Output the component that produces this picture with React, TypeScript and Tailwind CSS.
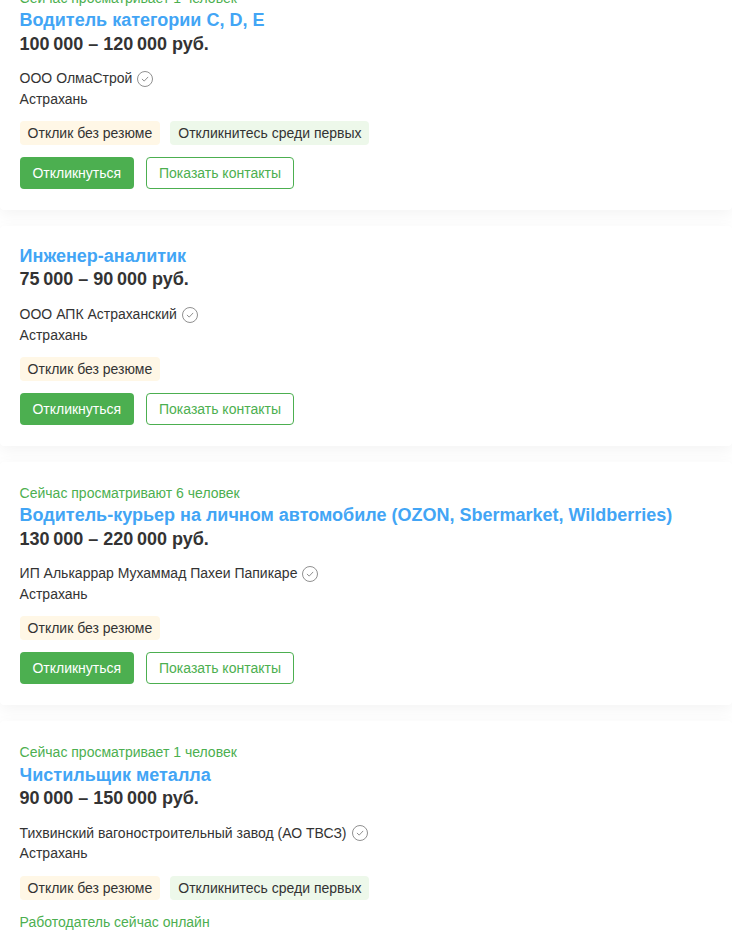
const Check = () => (
  <svg width="16" height="16" viewBox="0 0 16 16" fill="none" className="ml-[5px] shrink-0">
    <circle cx="8" cy="8" r="7.5" stroke="#909090" />
    <path d="M5.2 8.2 7.2 10.1 10.9 6.2" stroke="#909090" strokeLinecap="round" strokeLinejoin="round" />
  </svg>
);

type Vacancy = {
  viewing?: string;
  title: string;
  salary: string;
  company: string;
  first?: boolean;
  online?: boolean;
};

const VACANCIES: Vacancy[] = [
  { viewing: 'Сейчас просматривает 1 человек', title: 'Водитель категории C, D, E', salary: '100\u2009000 – 120\u2009000 руб.', company: 'ООО ОлмаСтрой', first: true },
  { title: 'Инженер-аналитик', salary: '75\u2009000 – 90\u2009000 руб.', company: 'ООО АПК Астраханский' },
  { viewing: 'Сейчас просматривают 6 человек', title: 'Водитель-курьер на личном автомобиле (OZON, Sbermarket, Wildberries)', salary: '130\u2009000 – 220\u2009000 руб.', company: 'ИП Алькаррар Мухаммад Пахеи Папикаре' },
  { viewing: 'Сейчас просматривает 1 человек', title: 'Чистильщик металла', salary: '90\u2009000 – 150\u2009000 руб.', company: 'Тихвинский вагоностроительный завод (АО ТВСЗ)', first: true, online: true },
];

function Card({ v }: { v: Vacancy }) {
  return (
    <div className="bg-white rounded-[4px] pt-[19.1px] pb-[20.4px] px-[19.6px] shadow-[0_4px_16px_rgba(0,0,0,0.05)] last:mt-[0.4px]">
      {v.viewing && <div className="text-[14px] leading-[20px] text-[#4caf50] mt-[1.9px] mb-[1.9px]">{v.viewing}</div>}
      <div className="text-[18px] leading-[23.2px] font-bold text-[#42a5f5]">{v.title}</div>
      <div className="text-[18px] leading-[23.6px] font-bold text-[#333]">{v.salary}</div>
      <div className={`${v.viewing ? 'mt-[12.1px]' : 'mt-[12.7px]'} flex items-center text-[14px] ${v.viewing ? 'leading-[20.6px]' : 'leading-[20.4px]'} text-[#333]`}>
        {v.company}
        <Check />
      </div>
      <div className="text-[14px] leading-[20.3px] text-[#333]">Астрахань</div>
      <div className="mt-[12.1px] flex gap-[10px] text-[14px] leading-[24px] text-[#333]">
        <span className="bg-[#fff7e6] rounded-[4px] px-2">Отклик без резюме</span>
        {v.first && <span className="bg-[#edf8ea] rounded-[4px] pl-2 pr-[7.5px]">Откликнитесь среди первых</span>}
      </div>
      {v.online ? (
        <div className="mt-[12px] text-[14px] leading-[20px] text-[#4caf50]">Работодатель сейчас онлайн</div>
      ) : (
        <div className="mt-[12px] flex gap-3 text-[14px] leading-[20px]">
          <button className="h-8 w-[114.4px] rounded-[4px] bg-[#4caf50] text-white">Откликнуться</button>
          <button className="h-8 w-[148px] rounded-[4px] border border-[#4caf50] bg-white text-[#4caf50]">Показать контакты</button>
        </div>
      )}
    </div>
  );
}

export default function App() {
  return (
    <div className="h-[935px] overflow-hidden bg-white font-['Liberation_Sans',Arial,sans-serif]">
      <div className="-mt-[33.4px] flex flex-col gap-4">
        {VACANCIES.map((v, i) => (
          <Card key={i} v={v} />
        ))}
      </div>
    </div>
  );
}
